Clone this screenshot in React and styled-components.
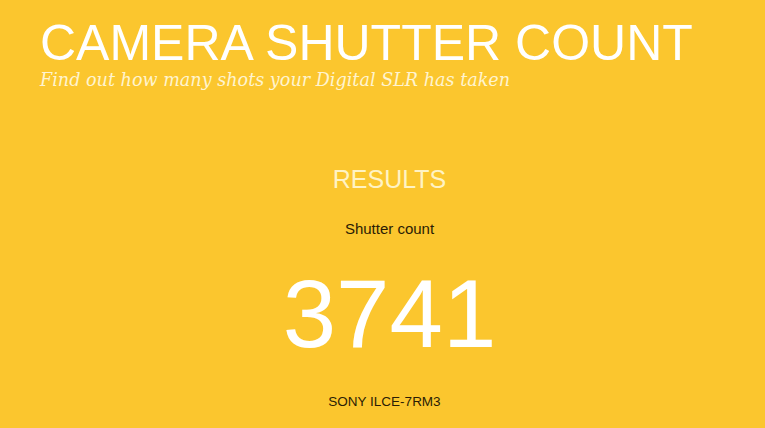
import React from 'react'
import styled, { createGlobalStyle } from 'styled-components'

const GlobalStyle = createGlobalStyle`
  html, body {
    margin: 0;
    padding: 0;
    background: #fbc62e;
  }
  body {
    font-family: "Liberation Sans", Arial, sans-serif;
  }
`

const Page = styled.div`
  width: 100%;
  min-height: 428px;
  background: #fbc62e;
  overflow: hidden;
`

const Header = styled.header`
  padding: 18px 0 0 40px;
`

const Title = styled.h1`
  margin: 0;
  font-family: "Liberation Sans", Arial, sans-serif;
  font-weight: 400;
  font-size: 50px;
  line-height: 50px;
  color: #ffffff;
  white-space: nowrap;
`

const Tagline = styled.p`
  margin: 3px 0 0;
  font-family: "DejaVu Serif", Georgia, serif;
  font-style: italic;
  font-size: 17.6px;
  line-height: 18px;
  color: #fff4cf;
  white-space: nowrap;
`

const Results = styled.section`
  display: flex;
  flex-direction: column;
  align-items: center;
  margin-top: 78px;
  padding-left: 14px;
`

const Heading = styled.h2`
  margin: 0;
  font-weight: 400;
  font-size: 25px;
  line-height: 1;
  color: #fff3c4;
`

const Label = styled.div`
  margin-top: ${p => p.$gap}px;
  margin-right: ${p => p.$shift || 0}px;
  font-size: ${p => p.$size}px;
  line-height: 1;
  color: #2b1d05;
`

const Count = styled.div`
  margin-top: 30px;
  font-size: 96px;
  line-height: 1;
  color: #ffffff;
`

const App = () => {
  const result = { count: 3741, model: 'SONY ILCE-7RM3' }

  return (
    <Page>
      <GlobalStyle />
      <Header>
        <Title>CAMERA SHUTTER COUNT</Title>
        <Tagline>Find out how many shots your Digital SLR has taken</Tagline>
      </Header>

      <Results>
        <Heading>RESULTS</Heading>
        <Label $gap={29} $size={15}>Shutter count</Label>
        <Count>{result.count}</Count>
        <Label $gap={33} $size={13.5} $shift={10}>{result.model}</Label>
      </Results>
    </Page>
  )
}

export default App
